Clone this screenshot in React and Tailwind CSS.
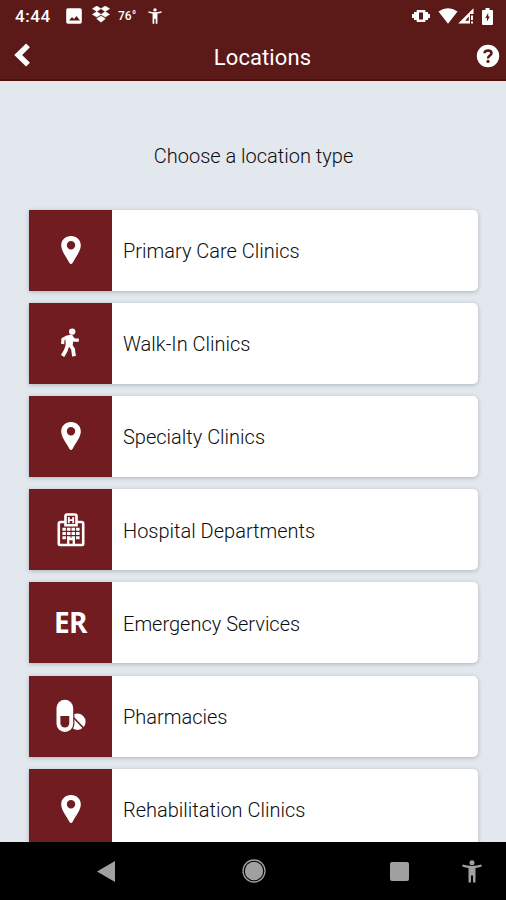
import React from 'react';

const Accessibility = ({ className }) => (
  <svg viewBox="0 0 20 23" className={className} fill="currentColor">
    <circle cx="10" cy="2.7" r="2.5" />
    <path d="M.7 4.6Q10 7.4 19.3 4.6L19.8 6.6Q16.5 7.7 13.5 8V22.6H11V15.5H9V22.6H6.5V8Q3.5 7.7.2 6.6Z" />
  </svg>
);

const Pin = () => (
  <svg viewBox="0 0 20 28" className="h-7 w-5" fill="white">
    <path
      fillRule="evenodd"
      d="M10 0C4.4 0 .2 4 .2 9.3C.2 15 5 20.5 8.3 26.7Q10 29.3 11.7 26.7C15 20.5 19.8 15 19.8 9.3C19.8 4 15.6 0 10 0ZM10 5A4.2 4.2 0 1 1 10 13.4A4.2 4.2 0 0 1 10 5Z"
    />
  </svg>
);

const Walk = () => (
  <svg viewBox="0 0 20 30" className="mr-0.5 h-[30px] w-5" fill="none" stroke="white" strokeLinejoin="round">
    <circle cx="12.2" cy="3.6" r="3.2" fill="white" stroke="none" />
    <path d="M6.3 8.7L11.5 7.5L12.8 10L11.5 18.2L6.7 17Z" fill="white" strokeWidth="2" />
    <path d="M7 9.2L3 11.2L2.6 16M12 9.8L14.3 12.1H18.8" strokeWidth="3.2" />
    <path d="M7.8 16.5L5.8 22.5L2.6 28M9.8 16.5L13 21L14 28.3" strokeWidth="3.8" />
  </svg>
);

const Hospital = () => (
  <svg viewBox="0 0 28 34" className="h-[34px] w-7" fill="none" stroke="white">
    <path d="M8.5 9H3.5Q1.8 9 1.8 10.7V30.8Q1.8 32 3 32H25Q26.2 32 26.2 30.8V10.7Q26.2 9 24.5 9H19.5M8.5 12.3V3Q8.5 1.5 10 1.5H18Q19.5 1.5 19.5 3V12.3H8.5Z" strokeWidth="2.6" />
    <path d="M11.8 4V10.2M16.2 4V10.2M12 7.1H16" strokeWidth="1.8" />
    <path d="M5.4 16.2H22.6M5.4 20.5H22.6M5.4 24.8H22.6" strokeWidth="3" strokeDasharray="3.5 1.07" />
    <path d="M11.2 32V26H16.8V32" strokeWidth="2.3" />
  </svg>
);

const Pills = () => (
  <svg viewBox="0 0 30 34" className="h-[34px] w-[30px]">
    <circle cx="21.4" cy="22.7" r="8.2" fill="white" />
    <path d="M16 17L27.5 29" stroke="#701c20" strokeWidth="1.7" />
    <rect x=".2" y="0" width="18.2" height="34" rx="9.1" fill="#701c20" />
    <rect x=".5" y=".8" width="16.7" height="32.2" rx="8.3" fill="white" />
    <path d="M4.4 17H13.3V24A4.45 4.45 0 0 1 4.4 24Z" fill="#701c20" />
  </svg>
);

const ER = () => <span className="pb-0.5 text-[28px] font-bold leading-none tracking-[-0.6px] text-white [font-family:'Open_Sans',sans-serif]">ER</span>;

const locations = [
  ['Primary Care Clinics', Pin],
  ['Walk-In Clinics', Walk],
  ['Specialty Clinics', Pin],
  ['Hospital Departments', Hospital],
  ['Emergency Services', ER],
  ['Pharmacies', Pills],
  ['Rehabilitation Clinics', Pin],
];

const StatusBar = () => (
  <div className="flex h-8 items-center pl-[15px] pr-[13px] text-white">
    <span className="w-[51px] text-[17px] font-medium leading-none tracking-[0.6px]">4:44</span>
    <svg viewBox="0 0 16 16" className="h-4 w-4">
      <rect x=".2" y=".3" width="15.6" height="15.4" rx="1.8" fill="white" />
      <path d="M3 12.5L6 9L8 11L10.5 8L14 12.5Z" fill="#5b1a18" />
    </svg>
    <svg viewBox="0 0 18 17" className="mb-[3px] ml-2.5 h-[17px] w-[18px]" fill="white">
      <path d="M4.8 0L9 2.7L4.8 5.4L.4 2.7ZM13.2 0L17.6 2.7L13.2 5.4L9 2.7ZM4.8 5.6L9 8.4L4.8 11.1L.4 8.4ZM13.2 5.6L17.6 8.4L13.2 11.1L9 8.4ZM9 10L13.3 12.8L9 16.2L4.7 12.8Z" stroke="white" strokeWidth=".5" />
    </svg>
    <span className="ml-2 w-[22px] text-[12px] font-medium leading-none">76°</span>
    <Accessibility className="ml-2 h-4 w-3.5" />
    <svg viewBox="0 0 18 14" className="ml-auto h-3.5 w-[18px]" fill="white">
      <path fillRule="evenodd" d="M4.7 1H13.3V13H4.7ZM7 3.4V10.6H11V3.4Z" />
      <path d="M2 3H5V11H2ZM13 3H16V11H13ZM0 5H2.2V9H0ZM15.8 5H18V9H15.8Z" />
    </svg>
    <svg viewBox="0 0 20 16" className="ml-2 h-4 w-5" fill="white">
      <path d="M.5 3.5Q10-3 19.5 3.5L10 15.7Z" />
    </svg>
    <svg viewBox="0 0 17 16" className="mr-px h-4 w-[17px]">
      <path d="M.2 15.5L15.5 .2V6H12V15.5Z" fill="white" />
      <path d="M7.2 12.8L10.8 8.5V12.8Z" fill="#5b1a18" />
      <path d="M14 7.5V12M14 13.5V15.5" stroke="white" strokeWidth="2" />
    </svg>
    <svg viewBox="0 0 11 17" className="ml-[6px] h-[17px] w-[11px]">
      <path d="M1 2H3.5V0H7.5V2H10Q11 2 11 3V16Q11 17 10 17H1Q0 17 0 16V3Q0 2 1 2Z" fill="white" />
      <path d="M6.2 4.8L3.3 10H5V13.5L7.8 8.6H6.2Z" fill="#5b1a18" />
    </svg>
  </div>
);

export default function App() {
  return (
    <div className="flex h-[900px] w-[506px] flex-col overflow-hidden bg-[#e3e8ef] text-[#0c0d0e] [font-family:Roboto,sans-serif]">
      <header className="h-[81px] shrink-0 border-b-2 border-[#4e100f] bg-[#5b1a18] text-white">
        <StatusBar />
        <div className="flex h-[49px] items-center pl-[14px] pr-[6px]">
          <svg viewBox="0 0 18 24" className="mb-[3px] h-6 w-[18px]" fill="none" stroke="white" strokeWidth="5.5">
            <path d="M14 2.4L4.2 12L14 21.6" />
          </svg>
          <h1 className="flex-1 pl-[17px] pt-[3px] text-center text-[22px] font-normal leading-none tracking-[0.1px]">Locations</h1>
          <svg viewBox="0 0 24 24" className="mb-0.5 h-6 w-6">
            <circle cx="12" cy="12" r="11.2" fill="white" />
            <path d="M8.5 9.2C8.7 5.5 15.5 5.5 15.5 9.2C15.5 11.6 12 11.5 12 14.4" fill="none" stroke="#5b1a18" strokeWidth="2.5" />
            <circle cx="12" cy="17.4" r="1.6" fill="#5b1a18" />
          </svg>
        </div>
      </header>
      <main className="min-h-0 flex-1 overflow-hidden">
        <p className="pl-px pt-[63px] text-center text-[20px] font-light leading-6">Choose a location type</p>
        <div className="ml-[29px] mt-[41.6px] flex w-[449px] flex-col gap-[12.2px]">
          {locations.map(([label, Icon]) => (
            <div key={label} className="flex h-[81px] shrink-0 items-center overflow-hidden rounded-r-[5px] bg-white shadow-[0_1px_4px_rgba(40,60,60,0.3)]">
              <div className="flex h-full w-[83px] items-center justify-center bg-[#701c20]">
                <Icon />
              </div>
              <span className="pl-[11px] pt-0.5 text-[20px] font-light leading-6">{label}</span>
            </div>
          ))}
        </div>
      </main>
      <nav className="flex h-[58px] shrink-0 items-center bg-black text-[#a0a0a0]">
        <svg viewBox="0 0 18 21" className="ml-[97px] h-[21px] w-[18px]" fill="currentColor">
          <path d="M18 0V21L0 10.5Z" />
        </svg>
        <svg viewBox="0 0 24 24" className="ml-[127px] h-6 w-6" fill="currentColor">
          <circle cx="12" cy="12" r="9.2" />
          <circle cx="12" cy="12" r="11" fill="none" stroke="currentColor" strokeWidth="1.3" />
        </svg>
        <div className="ml-[124px] h-[19px] w-[19px] rounded-[2px] bg-[#a0a0a0]" />
        <Accessibility className="ml-[53px] h-[23px] w-5" />
      </nav>
    </div>
  );
}
